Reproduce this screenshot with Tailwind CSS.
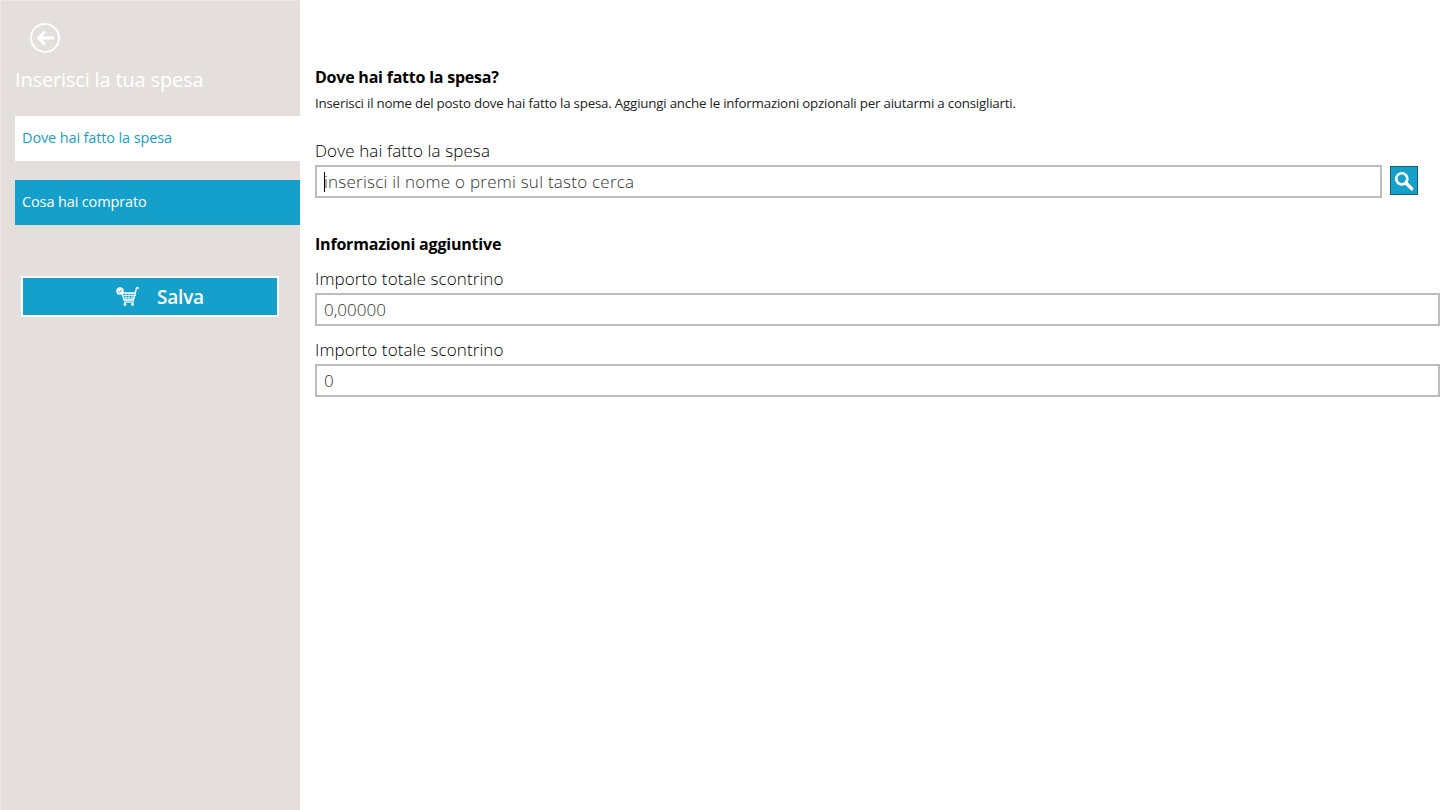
<!DOCTYPE html>
<html lang="it">
<head>
  <meta charset="UTF-8" />
  <title>Inserisci la tua spesa</title>
  <script src="https://cdn.jsdelivr.net/npm/@tailwindcss/browser@4"></script>
</head>
<body class="bg-white w-[1440px] h-[810px] overflow-hidden flex font-['Open_Sans','Noto_Sans',sans-serif]">
  <!-- sidebar -->
  <aside class="w-[300px] h-[810px] shrink-0 bg-[#e4dfdc] pl-[14px] border-l border-t border-[#ebe7e5]">
    <button class="block w-[30px] h-[30px] ml-[15px] mt-[22px] rounded-full border-2 border-white flex items-center justify-center">
      <svg width="18" height="16" viewBox="0 0 18 16" fill="none" stroke="white" stroke-width="3"><path d="M18 8H3M9 1.500 2.500 8 9 14.500"/></svg>
    </button>
    <h1 class="mt-[13px] h-[28px] text-[20px] leading-[28px] text-white tracking-[-0.16px]">Inserisci la tua spesa</h1>
    <div class="mt-[22px] h-[45px] bg-white pl-[7px] text-[14.500px] leading-[43px] text-[#15a0cb] tracking-[-0.13px]">Dove hai fatto la spesa</div>
    <div class="mt-[19px] h-[45px] bg-[#15a0cb] pl-[7px] text-[14.500px] leading-[43px] text-white tracking-[-0.13px]">Cosa hai comprato</div>
    <button class="mt-[51px] ml-[6px] w-[258px] h-[41px] bg-[#15a0cb] border-2 border-white flex items-center pl-[93px] gap-[17px] text-white">
      <svg width="24" height="20" viewBox="0 0 24 20" fill="none" stroke="white">
        <path d="M23 1h-2.500L17.500 13H8L6 6h14" stroke-width="1.300"/>
        <path d="M7 8.500h13M7.500 11h11M10 6v7M13 6v7M16 6v7" stroke-width="0.800"/>
        <path d="M8 15h10" stroke-width="1.200"/>
        <circle cx="9" cy="17.500" r="1.400" fill="white" stroke="none"/>
        <circle cx="16.500" cy="17.500" r="1.400" fill="white" stroke="none"/>
        <circle cx="4" cy="4" r="3.700" fill="white" stroke="none"/>
        <path d="M2.200 4.200 3.600 5.200 5.800 3" stroke="#15a0cb" stroke-width="1"/>
      </svg>
      <span class="text-[19px] leading-[24px] font-semibold tracking-[-0.2px]">Salva</span>
    </button>
  </aside>

  <!-- form -->
  <main class="flex-1 pl-[15px] pt-[67px] text-black">
    <h2 class="text-[16px] leading-[20px] font-bold tracking-[-0.22px]">Dove hai fatto la spesa?</h2>
    <p class="mt-[7px] text-[13.330px] leading-[18px] text-[#222] tracking-[-0.21px]">Inserisci il nome del posto dove hai fatto la spesa. Aggiungi anche le informazioni opzionali per aiutarmi a consigliarti.</p>

    <label class="block mt-[28px] text-[17px] leading-[22px] text-black font-light tracking-[0.12px]">Dove hai fatto la spesa</label>
    <div class="flex items-start mt-[3px]">
      <div class="relative w-[1067px] h-[33px] border-2 border-[#bdbdbd] pl-[7px] text-[17px] leading-[29px] text-[#333] font-light tracking-[0.24px]">
        inserisci il nome o premi sul tasto cerca
        <span class="absolute left-[7px] top-[5px] w-px h-[20px] bg-black"></span>
      </div>
      <button class="ml-[8px] mt-px w-[28px] h-[29px] bg-[#15a0cb] border border-[#1d5a70] flex items-center justify-center">
        <svg width="20" height="20" viewBox="0 0 18 18" fill="none" stroke="white"><circle cx="7" cy="7" r="5" stroke-width="2.400"/><path d="M10.800 10.800 16 16" stroke-width="3" stroke-linecap="round"/></svg>
      </button>
    </div>

    <h3 class="mt-[35px] text-[16px] leading-[22px] font-bold tracking-[-0.2px]">Informazioni aggiuntive</h3>
    <label class="block mt-[13px] text-[17px] leading-[22px] text-black font-light tracking-[0.1px]">Importo totale scontrino</label>
    <div class="mt-[3px] h-[33px] border-2 border-[#bdbdbd] pl-[7px] text-[17px] leading-[29px] text-[#333] font-light">0,00000</div>
    <label class="block mt-[13px] text-[17px] leading-[22px] text-black font-light tracking-[0.1px]">Importo totale scontrino</label>
    <div class="mt-[3px] h-[33px] border-2 border-[#bdbdbd] pl-[7px] text-[17px] leading-[29px] text-[#333] font-light">0</div>
  </main>
</body>
</html>
